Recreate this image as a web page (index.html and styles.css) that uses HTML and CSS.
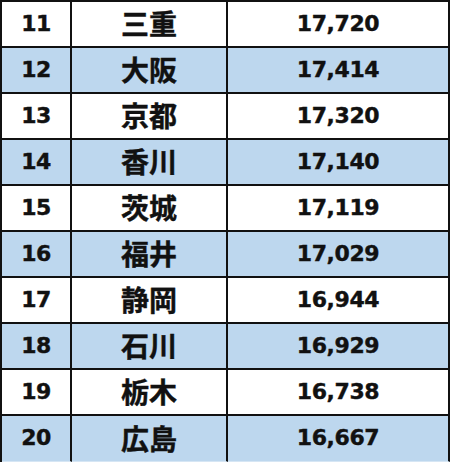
FILE: index.html
```html
<!DOCTYPE html>
<html lang="ja">
<head>
<meta charset="utf-8">
<link rel="stylesheet" href="styles.css">
</head>
<body>
<div class="table">
  <div class="row"><div class="cell rank">11</div><div class="cell pref">三重</div><div class="cell val">17,720</div></div>
  <div class="row alt"><div class="cell rank">12</div><div class="cell pref">大阪</div><div class="cell val">17,414</div></div>
  <div class="row"><div class="cell rank">13</div><div class="cell pref">京都</div><div class="cell val">17,320</div></div>
  <div class="row alt"><div class="cell rank">14</div><div class="cell pref">香川</div><div class="cell val">17,140</div></div>
  <div class="row"><div class="cell rank">15</div><div class="cell pref">茨城</div><div class="cell val">17,119</div></div>
  <div class="row alt"><div class="cell rank">16</div><div class="cell pref">福井</div><div class="cell val">17,029</div></div>
  <div class="row"><div class="cell rank">17</div><div class="cell pref">静岡</div><div class="cell val">16,944</div></div>
  <div class="row alt"><div class="cell rank">18</div><div class="cell pref">石川</div><div class="cell val">16,929</div></div>
  <div class="row"><div class="cell rank">19</div><div class="cell pref">栃木</div><div class="cell val">16,738</div></div>
  <div class="row alt last"><div class="cell rank">20</div><div class="cell pref">広島</div><div class="cell val">16,667</div></div>
</div>
</body>
</html>
```
FILE: styles.css
```css
html, body {
  margin: 0;
  padding: 0;
  background: #ffffff;
}
.table {
  width: 450px;
  height: 462px;
  box-sizing: border-box;
  border-top: 2px solid #111;
  border-left: 2px solid #111;
  display: flex;
  flex-direction: column;
  font-family: "DejaVu Sans", "Noto Sans CJK JP", sans-serif;
  font-weight: bold;
  color: #111;
}
.row {
  display: grid;
  grid-template-columns: 70px 156px 222px;
  height: 46px;
  background: #ffffff;
}
.row.alt {
  background: #bdd7ee;
}
.cell {
  box-sizing: border-box;
  border-right: 2px solid #111;
  border-bottom: 2px solid #111;
  display: flex;
  align-items: center;
  justify-content: center;
  padding-bottom: 2px;
  -webkit-text-stroke: 0.4px #111;
}
.row.last .cell {
  border-bottom-color: #d6e6f4;
  border-bottom-width: 1px;
}
.rank {
  font-size: 22px;
  letter-spacing: -0.5px;
}
.val {
  font-size: 22px;
  letter-spacing: -0.4px;
}
.pref {
  font-family: "Noto Sans CJK JP", sans-serif;
  font-size: 28px;
  font-weight: 700;
}
```
